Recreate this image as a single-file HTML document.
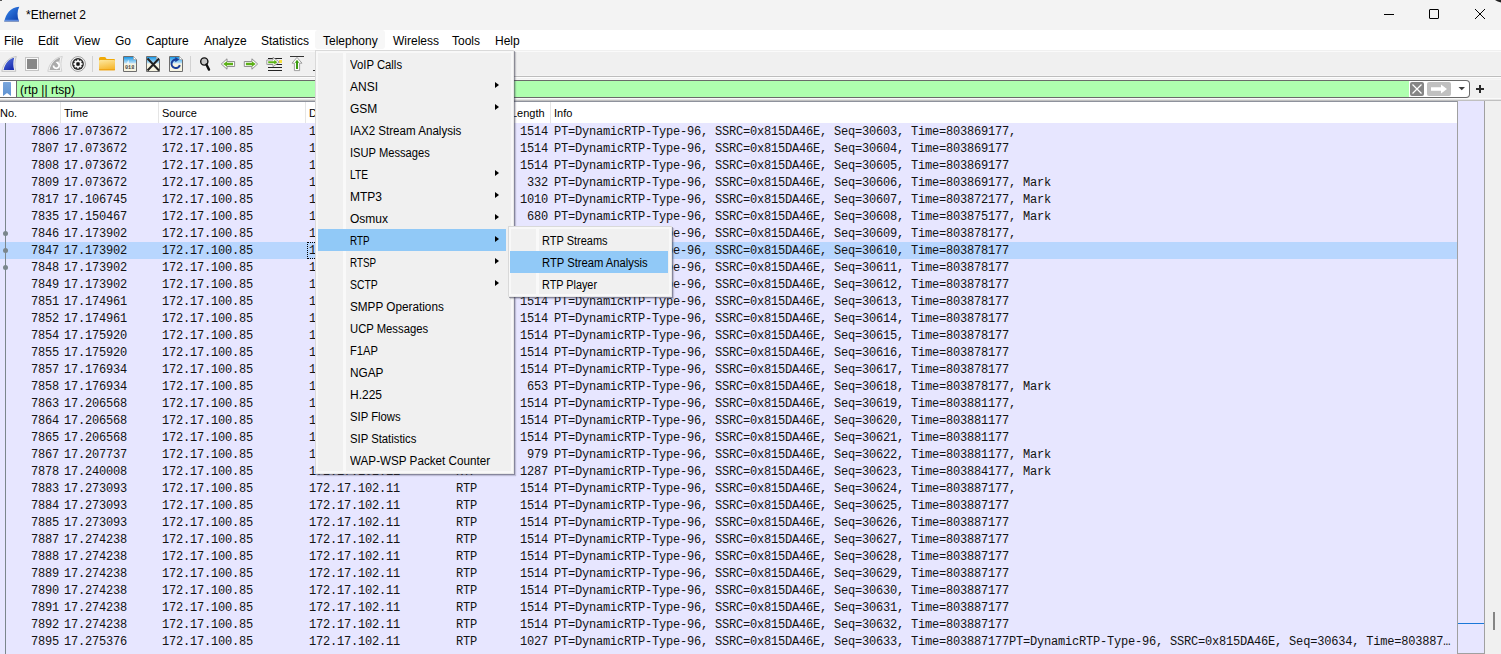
<!DOCTYPE html>
<html><head><meta charset="utf-8">
<style>
html,body{margin:0;padding:0;}
body{width:1501px;height:654px;overflow:hidden;position:relative;background:#f0f0f0;font-family:"Liberation Sans",sans-serif;font-size:12px;color:#000;}
.abs{position:absolute;}
#title{left:0;top:0;width:1501px;height:30px;background:#f3f3f3;}
#title .t{left:26px;top:7px;font-size:12px;line-height:16px;color:#000;}
#menubar{left:0;top:30px;width:1501px;height:20px;background:#fff;}
#menubar span{position:absolute;top:3px;line-height:16px;white-space:nowrap;}
#telhl{left:315px;top:30px;width:70px;height:19px;background:#f7f7f7;border-radius:3px;}
#toolbar{left:0;top:50px;width:1501px;height:26px;background:#f0f0f0;border-top:1px solid #f0f0f0;box-shadow:inset 0 1px 0 #fafafa;}
#filter{left:0;top:80px;width:1469px;height:19px;}
#hdr{left:0;top:102px;width:1457px;height:21px;background:#fff;}
#hdr span{position:absolute;top:4px;line-height:14px;font-size:11px;}
#hdr i{position:absolute;top:0;width:1px;height:22px;background:#e5e5e5;}
#list{left:0;top:123px;width:1457px;height:531px;background:#e7e6ff;}
.row{position:absolute;left:0;width:1457px;height:17px;font-family:"Liberation Mono",monospace;font-size:12px;letter-spacing:-0.2px;line-height:17px;color:#121212;white-space:pre;}
.row.sel{background:#b8d6fe;}
.c{position:absolute;top:1px;}
.no{right:1398px;}
.tm{left:64px;}
.src{left:162px;}
.dst{left:309px;}
.pr{left:456px;}
.ln{right:909px;}
.inf{left:554px;}
#vscroll{left:1457px;top:101px;width:28px;height:553px;background:#e7e6ff;border-left:1px solid #a0a0a0;border-right:1px solid #a0a0a0;box-sizing:border-box;}
#rightgray{left:1485px;top:101px;width:16px;height:553px;background:#f0f0f0;}
.mi{position:absolute;left:350px;transform-origin:0 0;height:22px;line-height:22px;white-space:nowrap;color:#000;}
.arr{position:absolute;left:495px;width:0;height:0;border-left:4px solid #000;border-top:3.5px solid transparent;border-bottom:3.5px solid transparent;}
</style></head><body>
<div id="title" class="abs">
  <svg class="abs" style="left:4px;top:6px" width="16" height="16" viewBox="0 0 16 16">
    <defs><linearGradient id="fin" x1="0" y1="0" x2="1" y2="1"><stop offset="0" stop-color="#3a8cf0"/><stop offset="1" stop-color="#0a3aa8"/></linearGradient></defs>
    <path d="M0.3 15.5 C2 8 6 1.5 15.3 0.8 C13 5 13 10 15 15.5 Z" fill="url(#fin)"/><path d="M1 13.8 L14.6 13.8 L15 15.5 L0.3 15.5 Z" fill="#6f98e4" opacity="0.8"/><rect x="0.3" y="15.1" width="14.7" height="0.7" fill="#8d97b0" opacity="0.8"/>
  </svg>
  <div class="abs t">*Ethernet 2</div>
  <div class="abs" style="left:1384px;top:14px;width:10px;height:1px;background:#000"></div>
  <div class="abs" style="left:1429px;top:9px;width:8px;height:8px;border:1px solid #000;border-radius:1px"></div>
  <svg class="abs" style="left:1474px;top:8px" width="12" height="12" viewBox="0 0 12 12"><path d="M1 1L11 11M11 1L1 11" stroke="#000" stroke-width="1"/></svg>
</div>
<div id="menubar" class="abs">
  <span style="left:4px">File</span>
  <span style="left:38px">Edit</span>
  <span style="left:74px">View</span>
  <span style="left:115px">Go</span>
  <span style="left:146px">Capture</span>
  <span style="left:204px">Analyze</span>
  <span style="left:261px">Statistics</span>
  <div id="telhl" class="abs" style="top:0"></div>
  <span style="left:323px">Telephony</span>
  <span style="left:393px">Wireless</span>
  <span style="left:452px">Tools</span>
  <span style="left:495px">Help</span>
</div>
<div id="toolbar" class="abs"></div>
<div class="abs" style="left:0;top:75px;width:1501px;height:1px;background:#f4f4f4"></div>
<div class="abs" style="left:0;top:76px;width:1501px;height:1px;background:#bdbdbd"></div>
<div class="abs" style="left:0;top:77px;width:1501px;height:1px;background:#fdfdfd"></div>
<div class="abs" style="left:0;top:78px;width:1501px;height:1px;background:#f2f2f2"></div>
<div class="abs" style="left:0;top:79px;width:1501px;height:1px;background:#f6f6f6"></div>
<svg class="abs" style="left:0;top:52px" width="320" height="24" viewBox="0 52 320 24">
  <defs>
    <linearGradient id="fin2" x1="0" y1="0" x2="0.6" y2="1"><stop offset="0" stop-color="#5a78e0"/><stop offset="1" stop-color="#1a2eb0"/></linearGradient>
    <linearGradient id="fold" x1="0" y1="0" x2="0.3" y2="1"><stop offset="0" stop-color="#fde8a0"/><stop offset="1" stop-color="#f6b830"/></linearGradient>
    <linearGradient id="sky" x1="0" y1="0" x2="0" y2="1"><stop offset="0" stop-color="#1a98e6"/><stop offset="1" stop-color="#c8e6f8"/></linearGradient>
  </defs>
  <!-- shark fin -->
  <path d="M1.8 71.3 C3 64 8 57.5 16.3 56.5 C14.5 61 14.5 66 15.8 71.3 Z" fill="#f4f4f4" stroke="#b8b8b8" stroke-width="0.8"/>
  <path d="M3.6 70 C5 63.5 9 58.8 14.2 57.8 C13 62 13 66 14.2 70 Z" fill="url(#fin2)"/>
  <!-- stop -->
  <rect x="25.5" y="57.5" width="13" height="13" fill="#fafafa" stroke="#c4c4c4" stroke-width="1"/>
  <rect x="27" y="59" width="10" height="10" fill="#888"/>
  <!-- restart fin -->
  <path d="M47.8 71.3 C49 64 54 57.5 62.3 56.5 C60.5 61 60.5 66 61.8 71.3 Z" fill="#f6f6f6" stroke="#c8c8c8" stroke-width="0.8"/>
  <path d="M49.6 70 C51 63.5 55 58.8 60.2 57.8 C59 62 59 66 60.2 70 Z" fill="#aaaaaa"/>
  <path d="M53.5 65.5 A2.8 2.8 0 1 0 57.5 63" fill="none" stroke="#fff" stroke-width="1.6"/>
  <path d="M55.5 62 L58.8 61.5 L58.2 64.5 Z" fill="#fff"/>
  <!-- gear -->
  <circle cx="78" cy="64" r="7.4" fill="#fbfbfb" stroke="#858585" stroke-width="0.8"/>
  <circle cx="78" cy="64" r="5.9" fill="#262626"/>
  <g fill="#f6f6f6">
    <circle cx="78" cy="64" r="3.6"/>
    <g id="teeth"><rect x="77.1" y="59.5" width="1.8" height="1.5"/><rect x="77.1" y="67" width="1.8" height="1.5"/><rect x="73.5" y="63.1" width="1.5" height="1.8"/><rect x="81" y="63.1" width="1.5" height="1.8"/></g>
    <use href="#teeth" transform="rotate(45 78 64)"/>
  </g>
  <rect x="76.3" y="62.3" width="3.4" height="3.4" rx="0.8" fill="#111"/>
  <rect x="92" y="56" width="1" height="16" fill="#d2d2d2"/>
  <!-- folder -->
  <path d="M99 58.5 Q99 57 100.5 57 L104.5 57 Q105.5 57 106 58 L106.5 59 L114 59 Q115 59 115 60 L115 61 L99 61 Z" fill="#f0aa08"/>
  <rect x="99" y="60" width="16" height="10.3" rx="1" fill="url(#fold)"/>
  <rect x="99" y="69.2" width="16" height="1.1" fill="#eda010"/>
  <!-- files -->
  <g id="f1">
    <path d="M123.5 56.5 L133.5 56.5 L136.5 59.5 L136.5 71.5 L123.5 71.5 Z" fill="#f6f4e2" stroke="#6e6e6e" stroke-width="1"/>
    <path d="M124 57 L133.3 57 L136 59.7 L136 63.5 L124 63.5 Z" fill="url(#sky)"/>
    <path d="M133.5 56.5 L133.5 59.5 L136.5 59.5" fill="#fff" stroke="#9a9a9a" stroke-width="0.6"/>
  </g>
  <text x="129.6" y="69.3" font-family="Liberation Mono" font-size="5.2" fill="#444" text-anchor="middle" font-weight="bold">018</text>
  <path d="M127 63.5 L128.4 59.5 L128.8 63.5 Z" fill="#fff"/>
  <use href="#f1" x="23"/>
  <path d="M147.5 58.5 L159 70.5 M159 58.5 L147.5 70.5" stroke="#222" stroke-width="2"/>
  <use href="#f1" x="46"/>
  <path d="M176.5 59.5 A4.3 4.3 0 1 0 179.9 65.2" fill="none" stroke="#1a3f9a" stroke-width="2"/>
  <path d="M175.3 57 L179.3 59.5 L175.3 62.2 Z" fill="#1a3f9a"/>
  <rect x="190" y="56" width="1" height="16" fill="#d2d2d2"/>
  <!-- magnifier -->
  <circle cx="204.3" cy="61.5" r="3.6" fill="#c8c8c8" stroke="#111" stroke-width="1.4"/>
  <path d="M206.4 64.5 L209 69.6" stroke="#111" stroke-width="2.4" stroke-linecap="round"/>
  <!-- back arrow -->
  <path d="M221.3 64 L227 58.8 L227 61.5 L234.6 61.5 L234.6 66.5 L227 66.5 L227 69.2 Z" fill="#fcfcfc" stroke="#858585" stroke-width="0.9" stroke-linejoin="round"/>
  <path d="M223.2 64 L227 61.3 L227 62.8 L233 62.8 L233 65.2 L227 65.2 L227 66.7 Z" fill="#5cb018"/>
  <!-- fwd arrow -->
  <path d="M257.6 64 L251.9 58.8 L251.9 61.5 L244.3 61.5 L244.3 66.5 L251.9 66.5 L251.9 69.2 Z" fill="#fcfcfc" stroke="#858585" stroke-width="0.9" stroke-linejoin="round"/>
  <path d="M255.7 64 L251.9 61.3 L251.9 62.8 L245.9 62.8 L245.9 65.2 L251.9 65.2 L251.9 66.7 Z" fill="#5cb018"/>
  <!-- goto -->
  <g fill="#222"><rect x="268" y="58" width="14" height="1"/><rect x="268" y="64" width="14" height="1"/><rect x="268" y="67" width="14" height="1"/><rect x="268" y="70" width="14" height="1"/></g>
  <rect x="279" y="60" width="3" height="3" fill="#f8e040"/>
  <path d="M266.8 60 L273 60 L273 57.3 L279.3 62 L273 66.7 L273 64.4 L266.8 64.4 Z" fill="#fcfcfc" stroke="#8a8a8a" stroke-width="0.8" stroke-linejoin="round"/>
  <path d="M268.2 61.2 L274.3 61.2 L274.3 59.8 L277.3 62.2 L274.3 64.6 L274.3 63.2 L268.2 63.2 Z" fill="#5ab414"/>
  <!-- first -->
  <rect x="290" y="56" width="14" height="1" fill="#333"/>
  <path d="M297 57.4 L302 63.2 L299.6 63.2 L299.6 70.6 L294.4 70.6 L294.4 63.2 L292 63.2 Z" fill="#fcfcfc" stroke="#8a8a8a" stroke-width="0.8" stroke-linejoin="round"/>
  <path d="M297 59.8 L299.2 62.8 L298 62.8 L298 69 L296 69 L296 62.8 L294.8 62.8 Z" fill="#3c9c10"/>
  <rect x="313" y="70" width="2" height="1" fill="#333"/>
</svg>

<div class="abs" style="left:0;top:80px;width:1470px;height:18px;background:#fff;border:1px solid #6a6a6a;border-left:none;border-radius:0 4px 4px 0;box-sizing:border-box;"></div>
<div class="abs" style="left:16px;top:81px;width:1px;height:16px;background:#6a6a6a"></div>
<div class="abs" style="left:17px;top:81px;width:1392px;height:16px;background:#afffaf"></div>
<svg class="abs" style="left:3px;top:82px" width="8" height="15" viewBox="0 0 8 15"><defs><linearGradient id="bm" x1="0" y1="0" x2="0" y2="1"><stop offset="0" stop-color="#7aa6dc"/><stop offset="1" stop-color="#5f93d2"/></linearGradient></defs><path d="M0 0.8 Q0 0 0.8 0 L7.2 0 Q8 0 8 0.8 L8 14 L4 11 L0 14 Z" fill="url(#bm)"/></svg>
<div class="abs" style="left:20px;top:82px;line-height:16px;font-size:12px;white-space:pre">(rtp || rtsp)</div>
<div class="abs" style="left:1410px;top:82px;width:14px;height:14px;background:#858585;border-radius:2px"></div>
<svg class="abs" style="left:1410px;top:82px" width="14" height="14" viewBox="0 0 14 14"><path d="M2.5 2.5L11.5 11.5M11.5 2.5L2.5 11.5" stroke="#fff" stroke-width="1.2"/></svg>
<div class="abs" style="left:1427px;top:82px;width:24px;height:14px;background:#c0c0c0;border-radius:2px"></div>
<svg class="abs" style="left:1427px;top:82px" width="24" height="14" viewBox="0 0 24 14"><path d="M4 5.3 L14 5.3 L14 2.5 L20 7 L14 11.5 L14 8.7 L4 8.7 Z" fill="#fff"/></svg>
<svg class="abs" style="left:1458px;top:86px" width="8" height="5" viewBox="0 0 8 5"><path d="M0.5 1 L7 1 L3.75 4.3 Z" fill="#3c3c3c"/></svg>
<div class="abs" style="left:1476px;top:88px;width:8px;height:2px;background:#2a2a2a"></div>
<div class="abs" style="left:1479px;top:85px;width:2px;height:8px;background:#2a2a2a"></div>
<div class="abs" style="left:0;top:98px;width:1501px;height:1px;background:#fafafa"></div>
<div class="abs" style="left:0;top:99px;width:1501px;height:1px;background:#e4e4e4"></div>
<div class="abs" style="left:0;top:100px;width:1501px;height:1px;background:#c0c0c0"></div>
<div class="abs" style="left:0;top:101px;width:1501px;height:1px;background:#8e929c"></div>

<div id="hdr" class="abs">
  <span style="left:0px">No.</span><i style="left:60px"></i>
  <span style="left:64px">Time</span><i style="left:158px"></i>
  <span style="left:162px">Source</span><i style="left:305px"></i>
  <span style="left:309px">Destination</span><i style="left:452px"></i>
  <span style="left:456px">Protocol</span><i style="left:509px"></i>
  <span style="left:511px">Length</span><i style="left:550px"></i>
  <span style="left:554px">Info</span>
</div>
<div id="list" class="abs"></div>
<div class="row" style="top:123px"><span class="c no">7806</span><span class="c tm">17.073672</span><span class="c src">172.17.100.85</span><span class="c dst">172.17.102.11</span><span class="c pr">RTP</span><span class="c ln">1514</span><span class="c inf">PT=DynamicRTP-Type-96, SSRC=0x815DA46E, Seq=30603, Time=803869177,</span></div>
<div class="row" style="top:140px"><span class="c no">7807</span><span class="c tm">17.073672</span><span class="c src">172.17.100.85</span><span class="c dst">172.17.102.11</span><span class="c pr">RTP</span><span class="c ln">1514</span><span class="c inf">PT=DynamicRTP-Type-96, SSRC=0x815DA46E, Seq=30604, Time=803869177</span></div>
<div class="row" style="top:157px"><span class="c no">7808</span><span class="c tm">17.073672</span><span class="c src">172.17.100.85</span><span class="c dst">172.17.102.11</span><span class="c pr">RTP</span><span class="c ln">1514</span><span class="c inf">PT=DynamicRTP-Type-96, SSRC=0x815DA46E, Seq=30605, Time=803869177</span></div>
<div class="row" style="top:174px"><span class="c no">7809</span><span class="c tm">17.073672</span><span class="c src">172.17.100.85</span><span class="c dst">172.17.102.11</span><span class="c pr">RTP</span><span class="c ln">332</span><span class="c inf">PT=DynamicRTP-Type-96, SSRC=0x815DA46E, Seq=30606, Time=803869177, Mark</span></div>
<div class="row" style="top:191px"><span class="c no">7817</span><span class="c tm">17.106745</span><span class="c src">172.17.100.85</span><span class="c dst">172.17.102.11</span><span class="c pr">RTP</span><span class="c ln">1010</span><span class="c inf">PT=DynamicRTP-Type-96, SSRC=0x815DA46E, Seq=30607, Time=803872177, Mark</span></div>
<div class="row" style="top:208px"><span class="c no">7835</span><span class="c tm">17.150467</span><span class="c src">172.17.100.85</span><span class="c dst">172.17.102.11</span><span class="c pr">RTP</span><span class="c ln">680</span><span class="c inf">PT=DynamicRTP-Type-96, SSRC=0x815DA46E, Seq=30608, Time=803875177, Mark</span></div>
<div class="row" style="top:225px"><span class="c no">7846</span><span class="c tm">17.173902</span><span class="c src">172.17.100.85</span><span class="c dst">172.17.102.11</span><span class="c pr">RTP</span><span class="c ln">1514</span><span class="c inf">PT=DynamicRTP-Type-96, SSRC=0x815DA46E, Seq=30609, Time=803878177,</span></div>
<div class="row sel" style="top:242px"><span class="c no">7847</span><span class="c tm">17.173902</span><span class="c src">172.17.100.85</span><span class="c dst">172.17.102.11</span><span class="c pr">RTP</span><span class="c ln">1514</span><span class="c inf">PT=DynamicRTP-Type-96, SSRC=0x815DA46E, Seq=30610, Time=803878177</span></div>
<div class="row" style="top:259px"><span class="c no">7848</span><span class="c tm">17.173902</span><span class="c src">172.17.100.85</span><span class="c dst">172.17.102.11</span><span class="c pr">RTP</span><span class="c ln">1514</span><span class="c inf">PT=DynamicRTP-Type-96, SSRC=0x815DA46E, Seq=30611, Time=803878177</span></div>
<div class="row" style="top:276px"><span class="c no">7849</span><span class="c tm">17.173902</span><span class="c src">172.17.100.85</span><span class="c dst">172.17.102.11</span><span class="c pr">RTP</span><span class="c ln">1514</span><span class="c inf">PT=DynamicRTP-Type-96, SSRC=0x815DA46E, Seq=30612, Time=803878177</span></div>
<div class="row" style="top:293px"><span class="c no">7851</span><span class="c tm">17.174961</span><span class="c src">172.17.100.85</span><span class="c dst">172.17.102.11</span><span class="c pr">RTP</span><span class="c ln">1514</span><span class="c inf">PT=DynamicRTP-Type-96, SSRC=0x815DA46E, Seq=30613, Time=803878177</span></div>
<div class="row" style="top:310px"><span class="c no">7852</span><span class="c tm">17.174961</span><span class="c src">172.17.100.85</span><span class="c dst">172.17.102.11</span><span class="c pr">RTP</span><span class="c ln">1514</span><span class="c inf">PT=DynamicRTP-Type-96, SSRC=0x815DA46E, Seq=30614, Time=803878177</span></div>
<div class="row" style="top:327px"><span class="c no">7854</span><span class="c tm">17.175920</span><span class="c src">172.17.100.85</span><span class="c dst">172.17.102.11</span><span class="c pr">RTP</span><span class="c ln">1514</span><span class="c inf">PT=DynamicRTP-Type-96, SSRC=0x815DA46E, Seq=30615, Time=803878177</span></div>
<div class="row" style="top:344px"><span class="c no">7855</span><span class="c tm">17.175920</span><span class="c src">172.17.100.85</span><span class="c dst">172.17.102.11</span><span class="c pr">RTP</span><span class="c ln">1514</span><span class="c inf">PT=DynamicRTP-Type-96, SSRC=0x815DA46E, Seq=30616, Time=803878177</span></div>
<div class="row" style="top:361px"><span class="c no">7857</span><span class="c tm">17.176934</span><span class="c src">172.17.100.85</span><span class="c dst">172.17.102.11</span><span class="c pr">RTP</span><span class="c ln">1514</span><span class="c inf">PT=DynamicRTP-Type-96, SSRC=0x815DA46E, Seq=30617, Time=803878177</span></div>
<div class="row" style="top:378px"><span class="c no">7858</span><span class="c tm">17.176934</span><span class="c src">172.17.100.85</span><span class="c dst">172.17.102.11</span><span class="c pr">RTP</span><span class="c ln">653</span><span class="c inf">PT=DynamicRTP-Type-96, SSRC=0x815DA46E, Seq=30618, Time=803878177, Mark</span></div>
<div class="row" style="top:395px"><span class="c no">7863</span><span class="c tm">17.206568</span><span class="c src">172.17.100.85</span><span class="c dst">172.17.102.11</span><span class="c pr">RTP</span><span class="c ln">1514</span><span class="c inf">PT=DynamicRTP-Type-96, SSRC=0x815DA46E, Seq=30619, Time=803881177,</span></div>
<div class="row" style="top:412px"><span class="c no">7864</span><span class="c tm">17.206568</span><span class="c src">172.17.100.85</span><span class="c dst">172.17.102.11</span><span class="c pr">RTP</span><span class="c ln">1514</span><span class="c inf">PT=DynamicRTP-Type-96, SSRC=0x815DA46E, Seq=30620, Time=803881177</span></div>
<div class="row" style="top:429px"><span class="c no">7865</span><span class="c tm">17.206568</span><span class="c src">172.17.100.85</span><span class="c dst">172.17.102.11</span><span class="c pr">RTP</span><span class="c ln">1514</span><span class="c inf">PT=DynamicRTP-Type-96, SSRC=0x815DA46E, Seq=30621, Time=803881177</span></div>
<div class="row" style="top:446px"><span class="c no">7867</span><span class="c tm">17.207737</span><span class="c src">172.17.100.85</span><span class="c dst">172.17.102.11</span><span class="c pr">RTP</span><span class="c ln">979</span><span class="c inf">PT=DynamicRTP-Type-96, SSRC=0x815DA46E, Seq=30622, Time=803881177, Mark</span></div>
<div class="row" style="top:463px"><span class="c no">7878</span><span class="c tm">17.240008</span><span class="c src">172.17.100.85</span><span class="c dst">172.17.102.11</span><span class="c pr">RTP</span><span class="c ln">1287</span><span class="c inf">PT=DynamicRTP-Type-96, SSRC=0x815DA46E, Seq=30623, Time=803884177, Mark</span></div>
<div class="row" style="top:480px"><span class="c no">7883</span><span class="c tm">17.273093</span><span class="c src">172.17.100.85</span><span class="c dst">172.17.102.11</span><span class="c pr">RTP</span><span class="c ln">1514</span><span class="c inf">PT=DynamicRTP-Type-96, SSRC=0x815DA46E, Seq=30624, Time=803887177,</span></div>
<div class="row" style="top:497px"><span class="c no">7884</span><span class="c tm">17.273093</span><span class="c src">172.17.100.85</span><span class="c dst">172.17.102.11</span><span class="c pr">RTP</span><span class="c ln">1514</span><span class="c inf">PT=DynamicRTP-Type-96, SSRC=0x815DA46E, Seq=30625, Time=803887177</span></div>
<div class="row" style="top:514px"><span class="c no">7885</span><span class="c tm">17.273093</span><span class="c src">172.17.100.85</span><span class="c dst">172.17.102.11</span><span class="c pr">RTP</span><span class="c ln">1514</span><span class="c inf">PT=DynamicRTP-Type-96, SSRC=0x815DA46E, Seq=30626, Time=803887177</span></div>
<div class="row" style="top:531px"><span class="c no">7887</span><span class="c tm">17.274238</span><span class="c src">172.17.100.85</span><span class="c dst">172.17.102.11</span><span class="c pr">RTP</span><span class="c ln">1514</span><span class="c inf">PT=DynamicRTP-Type-96, SSRC=0x815DA46E, Seq=30627, Time=803887177</span></div>
<div class="row" style="top:548px"><span class="c no">7888</span><span class="c tm">17.274238</span><span class="c src">172.17.100.85</span><span class="c dst">172.17.102.11</span><span class="c pr">RTP</span><span class="c ln">1514</span><span class="c inf">PT=DynamicRTP-Type-96, SSRC=0x815DA46E, Seq=30628, Time=803887177</span></div>
<div class="row" style="top:565px"><span class="c no">7889</span><span class="c tm">17.274238</span><span class="c src">172.17.100.85</span><span class="c dst">172.17.102.11</span><span class="c pr">RTP</span><span class="c ln">1514</span><span class="c inf">PT=DynamicRTP-Type-96, SSRC=0x815DA46E, Seq=30629, Time=803887177</span></div>
<div class="row" style="top:582px"><span class="c no">7890</span><span class="c tm">17.274238</span><span class="c src">172.17.100.85</span><span class="c dst">172.17.102.11</span><span class="c pr">RTP</span><span class="c ln">1514</span><span class="c inf">PT=DynamicRTP-Type-96, SSRC=0x815DA46E, Seq=30630, Time=803887177</span></div>
<div class="row" style="top:599px"><span class="c no">7891</span><span class="c tm">17.274238</span><span class="c src">172.17.100.85</span><span class="c dst">172.17.102.11</span><span class="c pr">RTP</span><span class="c ln">1514</span><span class="c inf">PT=DynamicRTP-Type-96, SSRC=0x815DA46E, Seq=30631, Time=803887177</span></div>
<div class="row" style="top:616px"><span class="c no">7892</span><span class="c tm">17.274238</span><span class="c src">172.17.100.85</span><span class="c dst">172.17.102.11</span><span class="c pr">RTP</span><span class="c ln">1514</span><span class="c inf">PT=DynamicRTP-Type-96, SSRC=0x815DA46E, Seq=30632, Time=803887177</span></div>
<div class="row" style="top:633px"><span class="c no">7895</span><span class="c tm">17.275376</span><span class="c src">172.17.100.85</span><span class="c dst">172.17.102.11</span><span class="c pr">RTP</span><span class="c ln">1027</span><span class="c inf">PT=DynamicRTP-Type-96, SSRC=0x815DA46E, Seq=30633, Time=803887177PT=DynamicRTP-Type-96, SSRC=0x815DA46E, Seq=30634, Time=803887…</span></div>
<div id="rightgray" class="abs"></div>
<div id="vscroll" class="abs"></div>
<div class="abs" style="left:5px;top:123px;width:1px;height:531px;background:#7b868c"></div>
<div class="abs" style="left:3px;top:231px;width:5px;height:5px;border-radius:50%;background:#7b868c"></div>
<div class="abs" style="left:3px;top:248px;width:5px;height:5px;border-radius:50%;background:#7b868c"></div>
<div class="abs" style="left:3px;top:265px;width:5px;height:5px;border-radius:50%;background:#7b868c"></div>
<div class="abs" style="left:307px;top:242px;width:20px;height:17px;box-sizing:border-box;border:1px dotted #000;"></div>
<div class="abs" style="left:1458px;top:623px;width:26px;height:1px;background:#1a78d8"></div>
<div class="abs" style="left:1457px;top:653px;width:28px;height:1px;background:#a0a0a0"></div>
<div class="abs" style="left:1493px;top:612px;width:2px;height:18px;background:#858585"></div>
<div class="abs" style="left:0;top:0;width:2px;height:1px;background:#555"></div>
<svg class="abs" style="left:1494px;top:0" width="7" height="4" viewBox="0 0 7 4"><path d="M1 0 Q3.5 1.8 7 2.6 L7 0 Z" fill="#222"/></svg>

<div class="abs" style="left:315px;top:50px;width:199px;height:424px;background:#f8f8f8;border:1px solid #d9d9d9;border-right-color:#e8e8e8;border-bottom-color:#e8e8e8;box-sizing:border-box;box-shadow:1px 1px 0 rgba(50,50,70,0.40),2px 2px 1px rgba(50,50,70,0.22);"></div>
<div class="abs" style="left:318px;top:53px;width:193px;height:418px;background:#f0f0f0"></div>
<div class="abs" style="left:343px;top:53px;width:3px;height:418px;background:#f9f9f9"></div>
<div class="abs" style="left:318px;top:229px;width:188px;height:22px;background:#91c9f7"></div>
<div class="mi" style="top:54px;transform:scaleX(0.944)">VoIP Calls</div>
<div class="mi" style="top:76px;transform:scaleX(1.000)">ANSI</div>
<div class="arr" style="top:82px"></div>
<div class="mi" style="top:98px;transform:scaleX(1.000)">GSM</div>
<div class="arr" style="top:104px"></div>
<div class="mi" style="top:120px;transform:scaleX(0.965)">IAX2 Stream Analysis</div>
<div class="mi" style="top:142px;transform:scaleX(0.929)">ISUP Messages</div>
<div class="mi" style="top:164px;transform:scaleX(0.850)">LTE</div>
<div class="arr" style="top:170px"></div>
<div class="mi" style="top:186px;transform:scaleX(1.000)">MTP3</div>
<div class="arr" style="top:192px"></div>
<div class="mi" style="top:208px;transform:scaleX(1.000)">Osmux</div>
<div class="arr" style="top:214px"></div>
<div class="mi" style="top:230px;transform:scaleX(0.818)">RTP</div>
<div class="arr" style="top:236px"></div>
<div class="mi" style="top:252px;transform:scaleX(0.817)">RTSP</div>
<div class="arr" style="top:258px"></div>
<div class="mi" style="top:274px;transform:scaleX(0.867)">SCTP</div>
<div class="arr" style="top:280px"></div>
<div class="mi" style="top:296px;transform:scaleX(0.979)">SMPP Operations</div>
<div class="mi" style="top:318px;transform:scaleX(0.939)">UCP Messages</div>
<div class="mi" style="top:340px;transform:scaleX(0.929)">F1AP</div>
<div class="mi" style="top:362px;transform:scaleX(0.984)">NGAP</div>
<div class="mi" style="top:384px;transform:scaleX(1.000)">H.225</div>
<div class="mi" style="top:406px;transform:scaleX(0.942)">SIP Flows</div>
<div class="mi" style="top:428px;transform:scaleX(0.942)">SIP Statistics</div>
<div class="mi" style="top:450px;transform:scaleX(0.972)">WAP-WSP Packet Counter</div>
<div class="abs" style="left:508px;top:226px;width:164px;height:71px;background:#f8f8f8;border:1px solid #d9d9d9;border-right-color:#e8e8e8;border-bottom-color:#e8e8e8;box-sizing:border-box;box-shadow:1px 1px 0 rgba(50,50,70,0.40),2px 2px 1px rgba(50,50,70,0.22);"></div>
<div class="abs" style="left:511px;top:229px;width:158px;height:65px;background:#f0f0f0"></div>
<div class="abs" style="left:536px;top:229px;width:3px;height:65px;background:#f9f9f9"></div>
<div class="abs" style="left:510px;top:251px;width:158px;height:22px;background:#91c9f7"></div>
<div class="mi" style="left:542px;top:230px;transform:scaleX(0.916)">RTP Streams</div>
<div class="mi" style="left:542px;top:252px;transform:scaleX(0.935)">RTP Stream Analysis</div>
<div class="mi" style="left:542px;top:274px;transform:scaleX(0.903)">RTP Player</div>

</body></html>
